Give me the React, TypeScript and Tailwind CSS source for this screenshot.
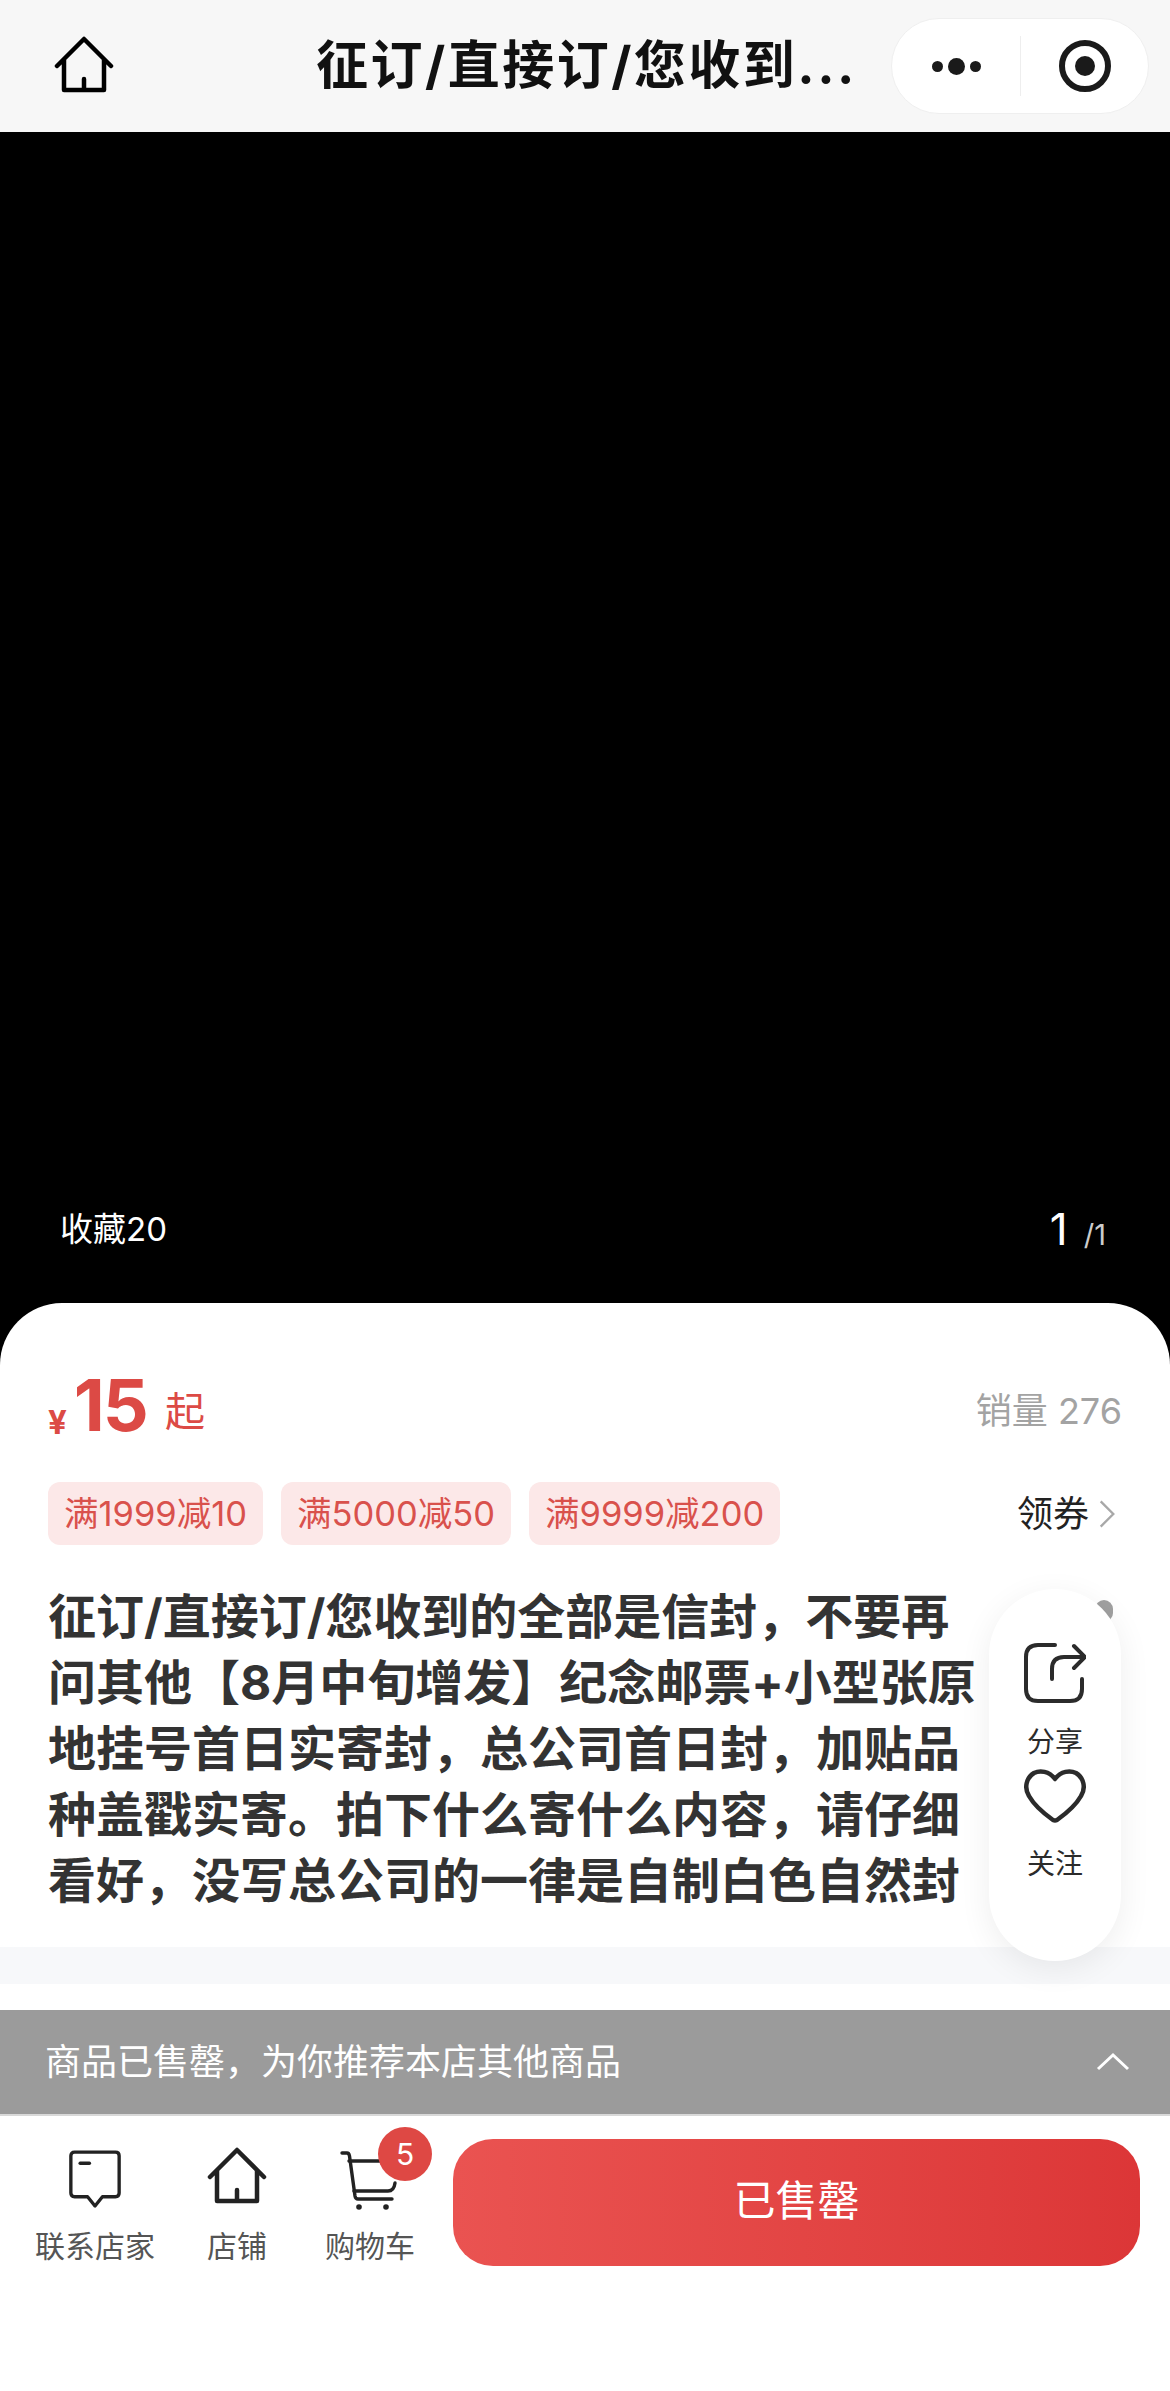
import React from 'react';

const FONT = "font-['Inter','Noto_Sans_CJK_SC',sans-serif]";

const coupons = ['满1999减10', '满5000减50', '满9999减200'];

const TITLE =
  '征订/直接订/您收到的全部是信封\uFF0C不要再问其他【8月中旬增发】纪念邮票+小型张原地挂号首日实寄封\uFF0C总公司首日封\uFF0C加贴品种盖戳实寄。拍下什么寄什么内容\uFF0C请仔细看好\uFF0C没写总公司的一律是自制白色自然封';

const SOLD_OUT = '商品已售罄\uFF0C为你推荐本店其他商品';

const HomeIcon: React.FC<{ className?: string }> = ({ className }) => (
  <svg viewBox="0 0 60 60" fill="none" stroke="currentColor" strokeLinejoin="round" strokeLinecap="round" className={className}>
    <path d="M3 30 L30 3 L57 30 M10 24 V54 H50 V24 M30 54 V43" strokeWidth="4.5" />
  </svg>
);

const App: React.FC = () => {
  return (
    <div className={`relative w-[1170px] h-[2391px] overflow-hidden bg-white flex flex-col ${FONT}`}>
      {/* Nav bar */}
      <header className="h-[132px] shrink-0 bg-[#f7f7f7] relative flex items-center">
        <HomeIcon className="w-[60px] h-[60px] ml-[54px] text-black" />
        <div className="ml-[202px] w-[560px] text-[52px] tracking-[2.5px] font-bold text-[#111] whitespace-nowrap leading-none">
          征订/直接订/您收到...
        </div>
        <div className="absolute left-[891px] top-[18px] w-[258px] h-[96px] rounded-[48px] bg-white border border-[#efefef] flex items-center">
          <div className="w-[128px] flex justify-center items-center gap-[5px]">
            <span className="w-[11px] h-[11px] rounded-full bg-[#1a1a1a]" />
            <span className="w-[17px] h-[17px] rounded-full bg-[#1a1a1a]" />
            <span className="w-[11px] h-[11px] rounded-full bg-[#1a1a1a]" />
          </div>
          <div className="w-px h-[60px] bg-[#eeeeee]" />
          <div className="flex-1 flex justify-center">
            <div className="w-[52px] h-[52px] rounded-full border-[6px] border-[#1a1a1a] flex items-center justify-center">
              <div className="w-[20px] h-[20px] rounded-full bg-[#1a1a1a]" />
            </div>
          </div>
        </div>
      </header>

      {/* Media area */}
      <section className="h-[1233px] shrink-0 bg-black flex items-start justify-between pl-[60px] pr-[64px] pt-[1077px]">
        <span className="text-[33px] leading-[40px] text-white">收藏20</span>
        <span className="text-white leading-[40px]">
          <span className="text-[44px]">1</span>
          <span className="text-[29px] text-[#cccccc] ml-[16px]">/1</span>
        </span>
      </section>

      {/* Product card */}
      <section className="relative -mt-[62px] bg-white rounded-t-[62px] pt-[62px]">
        <div className="flex items-end justify-between pl-[48px] pr-[48px] h-[76px]">
          <div className="flex items-end text-[#dc4a45]">
            <span className="text-[33px] font-bold leading-[32px] mb-[3px]">¥</span>
            <span className="text-[72px] font-bold leading-[72px] ml-[7px] tracking-[-2px]">15</span>
            <span className="text-[40px] leading-[48px] ml-[18px] mb-[5px]">起</span>
          </div>
          <div className="text-[36px] leading-[44px] text-[#a3a3a3] mb-[8px]">销量 276</div>
        </div>

        <div className="flex items-center mt-[41px] pl-[48px] pr-[54px]">
          {coupons.map((c) => (
            <span key={c} className="h-[63px] px-[16px] mr-[18px] rounded-[12px] bg-[#fce8e8] text-[#d9514c] text-[34.5px] leading-[63px] whitespace-nowrap">
              {c}
            </span>
          ))}
          <div className="ml-auto flex items-center text-[#222] text-[36px] leading-[44px]">
            领券
            <svg viewBox="0 0 20 32" fill="none" className="w-[18px] h-[30px] ml-[9px]">
              <path d="M3 2 L17 16 L3 30" stroke="#a8a8a8" strokeWidth="2.6" />
            </svg>
          </div>
        </div>

        <h1 className="mt-[39px] ml-[48px] w-[930px] text-[48px] leading-[66px] font-bold text-[#333333] h-[330px]">
          {TITLE}
        </h1>

        <div className="h-[37px] mt-[33px] bg-[#f7f8fa]" />
        <div className="h-[26px] bg-white" />

        {/* Sold-out banner */}
        <div className="h-[104px] bg-[#9b9b9b] flex items-center justify-between pl-[45px] pr-[40px] text-white text-[36px]">
          <span>{SOLD_OUT}</span>
          <svg viewBox="0 0 34 20" fill="none" className="w-[34px] h-[20px]">
            <path d="M2 17 L17 3 L32 17" stroke="white" strokeWidth="3" />
          </svg>
        </div>

        {/* Bottom bar */}
        <div className="border-t-2 border-[#d8d8d8] h-[276px] flex items-start">
          <div className="w-[190px] flex flex-col items-center pt-[34px]">
            <svg viewBox="0 0 56 64" fill="none" className="w-[52px] h-[60px] text-[#222]" stroke="currentColor">
              <path d="M6 2 H50 Q54 2 54 6 V46 Q54 50 50 50 H36 L28 60 L20 50 H6 Q2 50 2 46 V6 Q2 2 6 2 Z" strokeWidth="3.6" strokeLinejoin="round" />
              <path d="M12 14 H22" strokeWidth="3.6" strokeLinecap="round" />
            </svg>
            <span className="mt-[18px] text-[30px] leading-[36px] text-[#555]">联系店家</span>
          </div>
          <div className="w-[94px] flex flex-col items-center pt-[29px]">
            <HomeIcon className="w-[60px] h-[64px] text-[#222]" />
            <span className="mt-[19px] text-[30px] leading-[36px] text-[#555] whitespace-nowrap">店铺</span>
          </div>
          <div className="relative w-[170px] flex flex-col items-center pt-[34px]">
            <svg viewBox="0 0 60 60" fill="none" className="w-[60px] h-[60px] text-[#222] -mr-[2px]" stroke="currentColor" strokeLinecap="round" strokeLinejoin="round">
              <path d="M2 3 H7 Q9 3 9.5 6 L15 46 Q15.5 49 18 49 H52" strokeWidth="3.4" />
              <path d="M9 11 H56 M14 41 H48 Q54 41 55 33" strokeWidth="3.4" />
              <circle cx="19" cy="57" r="2.8" fill="currentColor" stroke="none" />
              <circle cx="46" cy="57" r="2.8" fill="currentColor" stroke="none" />
            </svg>
            <span className="mt-[18px] ml-[2px] text-[30px] leading-[36px] text-[#555] whitespace-nowrap">购物车</span>
            <span className="absolute left-[94px] top-[11px] w-[54px] h-[54px] rounded-full bg-[#de4844] text-white text-[30px] leading-[54px] text-center">5</span>
          </div>
          <button className="ml-[-1px] mt-[23px] w-[687px] h-[127px] pb-[4px] rounded-[40px] bg-gradient-to-r from-[#ea5351] to-[#dc3637] text-white text-[42px]">
            已售罄
          </button>
        </div>
      </section>

      {/* Floating action pill */}
      <div className="absolute left-[1095px] top-[1600px] w-[18px] h-[22px] rounded-full bg-[#a0a0a0]" />
      <aside className="absolute left-[989px] top-[1589px] w-[132px] h-[372px] rounded-[66px] bg-white shadow-[0_8px_32px_rgba(0,0,0,0.07)] flex flex-col items-center pt-[54px]">
        <svg viewBox="0 0 62 60" fill="none" stroke="#2b2b2b" strokeWidth="4" strokeLinecap="round" strokeLinejoin="round" className="w-[62px] h-[60px]">
          <path d="M31 2 H14 Q2 2 2 14 V46 Q2 58 14 58 H46 Q58 58 58 46 V36" />
          <path d="M28 36 V26 Q28 14 40 14 H60 M50 3 L61 14 L50 25" />
        </svg>
        <span className="mt-[22px] text-[28px] leading-[34px] text-[#2b2b2b]">分享</span>
        <svg viewBox="0 0 62 54" fill="none" stroke="#2b2b2b" strokeWidth="4.5" strokeLinejoin="round" className="w-[62px] h-[54px] mt-[10px]">
          <path d="M31 10 C25 2 16 1 10 4 C2 9 0 19 5 27 C10 36 22 46 29 51 Q31 52 33 51 C40 46 52 36 57 27 C62 19 60 9 52 4 C46 1 37 2 31 10 Z" />
        </svg>
        <span className="mt-[24px] text-[28px] leading-[34px] text-[#2b2b2b]">关注</span>
      </aside>
    </div>
  );
};

export default App;
